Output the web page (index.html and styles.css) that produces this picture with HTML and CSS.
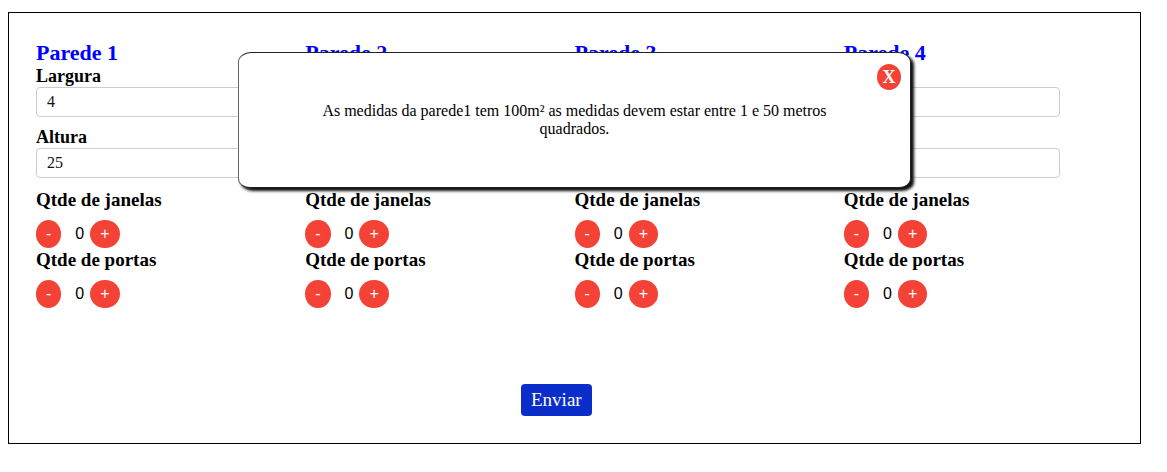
FILE: index.html
```html
<!DOCTYPE html>
<html lang="pt-BR">
<head>
<meta charset="utf-8">
<title>Paredes</title>
<link rel="stylesheet" href="styles.css">
</head>
<body>
<form class="sheet">
  <div class="walls">
    <div class="wall">
      <h2 class="wall-title">Parede 1</h2>
      <label class="field-label">Largura</label>
      <input class="field" type="text" value="4">
      <label class="field-label">Altura</label>
      <input class="field" type="text" value="25">
      <h3 class="count-title">Qtde de janelas</h3>
      <div class="counter"><button type="button" class="round">-</button><span class="count">0</span><button type="button" class="round">+</button></div>
      <h3 class="count-title">Qtde de portas</h3>
      <div class="counter"><button type="button" class="round">-</button><span class="count">0</span><button type="button" class="round">+</button></div>
    </div>
    <div class="wall">
      <h2 class="wall-title">Parede 2</h2>
      <label class="field-label">Largura</label>
      <input class="field" type="text" value="">
      <label class="field-label">Altura</label>
      <input class="field" type="text" value="">
      <h3 class="count-title">Qtde de janelas</h3>
      <div class="counter"><button type="button" class="round">-</button><span class="count">0</span><button type="button" class="round">+</button></div>
      <h3 class="count-title">Qtde de portas</h3>
      <div class="counter"><button type="button" class="round">-</button><span class="count">0</span><button type="button" class="round">+</button></div>
    </div>
    <div class="wall">
      <h2 class="wall-title">Parede 3</h2>
      <label class="field-label">Largura</label>
      <input class="field" type="text" value="">
      <label class="field-label">Altura</label>
      <input class="field" type="text" value="">
      <h3 class="count-title">Qtde de janelas</h3>
      <div class="counter"><button type="button" class="round">-</button><span class="count">0</span><button type="button" class="round">+</button></div>
      <h3 class="count-title">Qtde de portas</h3>
      <div class="counter"><button type="button" class="round">-</button><span class="count">0</span><button type="button" class="round">+</button></div>
    </div>
    <div class="wall">
      <h2 class="wall-title">Parede 4</h2>
      <label class="field-label">Largura</label>
      <input class="field" type="text" value="">
      <label class="field-label">Altura</label>
      <input class="field" type="text" value="">
      <h3 class="count-title">Qtde de janelas</h3>
      <div class="counter"><button type="button" class="round">-</button><span class="count">0</span><button type="button" class="round">+</button></div>
      <h3 class="count-title">Qtde de portas</h3>
      <div class="counter"><button type="button" class="round">-</button><span class="count">0</span><button type="button" class="round">+</button></div>
    </div>
  </div>
  <div class="actions">
    <button type="button" class="submit">Enviar</button>
  </div>

  <div class="modal">
    <button type="button" class="close">X</button>
    <p class="modal-text">As medidas da parede1 tem 100m² as medidas devem estar entre 1 e 50 metros quadrados.</p>
  </div>
</form>
</body>
</html>
```

FILE: styles.css
```css
* {
  box-sizing: border-box;
}

body {
  margin: 12px 8px 8px 8px;
  font-family: "Liberation Serif", "Times New Roman", serif;
  color: #000;
  background: #fff;
}

.sheet {
  position: relative;
  width: 1133px;
  height: 432px;
  border: 1px solid #000;
  padding: 28px 27px 27px 27px;
  display: flex;
  flex-direction: column;
}

.walls {
  display: grid;
  grid-template-columns: repeat(4, 1fr);
}

.wall {
  display: flex;
  flex-direction: column;
  align-items: flex-start;
}

.wall-title {
  margin: 0;
  font-size: 22px;
  line-height: 24px;
  font-weight: bold;
  color: #0000ff;
}

.field-label {
  display: block;
  margin-top: 1px;
  font-size: 18px;
  line-height: 20px;
  font-weight: bold;
}

.field {
  display: block;
  margin: 1px 0 10px 0;
  width: 216px;
  height: 30px;
  padding: 0 10px;
  border: 1px solid #cccccc;
  border-radius: 4px;
  font-family: inherit;
  font-size: 16px;
  color: #111;
  background: #fff;
  outline: none;
}

.wall .field + .field-label {
  margin-top: 0;
}

.count-title {
  margin: 1px 0 0 0;
  font-size: 19px;
  line-height: 21px;
  font-weight: bold;
}

.counter {
  display: flex;
  align-items: center;
  margin-top: 10px;
  height: 28px;
}

.round {
  border: none;
  border-radius: 50%;
  background: #f44336;
  color: #fff;
  font-family: "Liberation Sans", Arial, sans-serif;
  font-size: 16px;
  line-height: 18px;
  padding: 5px 10px;
  height: 28px;
  cursor: pointer;
}

.count {
  font-family: "Liberation Sans", Arial, sans-serif;
  font-size: 16px;
  line-height: 18px;
  margin: 0 6px 0 14px;
}

.actions {
  margin-top: 76px;
  display: flex;
}

.submit {
  margin-left: 485px;
  border: none;
  border-radius: 4px;
  background: #0b2ecb;
  color: #fff;
  font-family: "Liberation Serif", "Times New Roman", serif;
  font-size: 19px;
  line-height: 22px;
  padding: 5px 10px;
  height: 32px;
  cursor: pointer;
}

.modal {
  position: absolute;
  left: 229px;
  top: 39px;
  width: 673px;
  height: 136px;
  background: #fff;
  border: 1px solid #222;
  border-left-color: #666;
  border-radius: 13px 13px 12px 12px / 10px 10px 9px 9px;
  box-shadow: 3px 3px 3px rgba(0, 0, 0, 0.95);
  display: flex;
  align-items: center;
  justify-content: center;
  padding: 0 60px;
}

.modal-text {
  margin: 0;
  font-size: 16px;
  line-height: 18px;
  text-align: center;
}

.close {
  position: absolute;
  top: 11px;
  right: 9px;
  width: 24px;
  height: 26px;
  padding: 0;
  border: none;
  border-radius: 50%;
  background: #f44336;
  color: #fff;
  font-family: "Liberation Serif", "Times New Roman", serif;
  font-size: 18px;
  font-weight: bold;
  line-height: 26px;
  text-align: center;
  cursor: pointer;
}
```
